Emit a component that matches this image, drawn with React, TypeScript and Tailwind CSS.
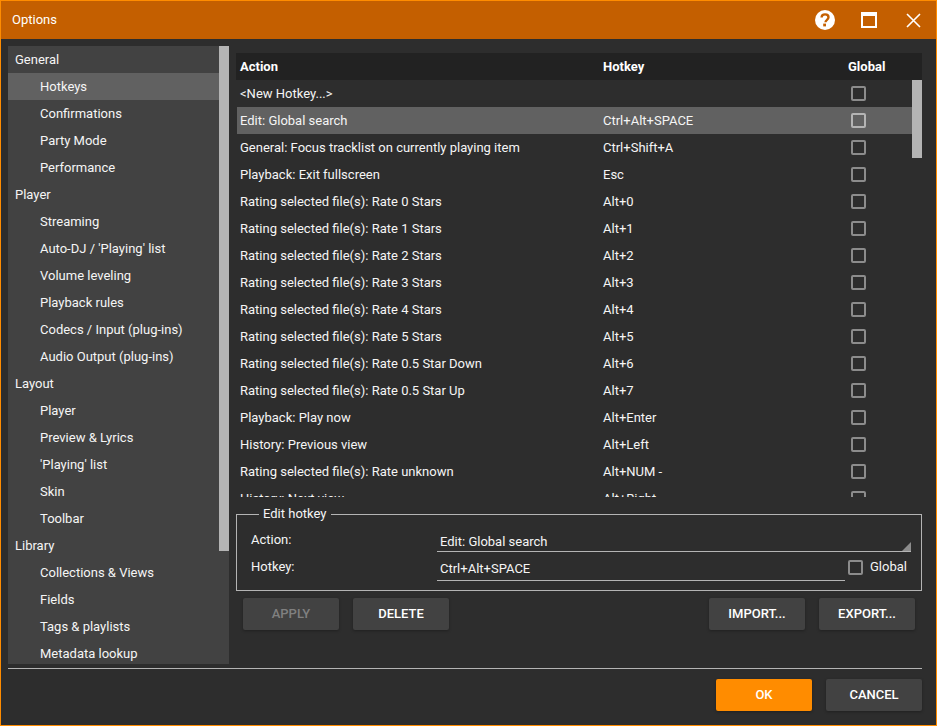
import React from "react";

const nav: [string, boolean][] = [
  ["General", false], ["Hotkeys", true], ["Confirmations", true], ["Party Mode", true], ["Performance", true],
  ["Player", false], ["Streaming", true], ["Auto-DJ / 'Playing' list", true], ["Volume leveling", true], ["Playback rules", true],
  ["Codecs / Input (plug-ins)", true], ["Audio Output (plug-ins)", true],
  ["Layout", false], ["Player", true], ["Preview & Lyrics", true], ["'Playing' list", true], ["Skin", true], ["Toolbar", true],
  ["Library", false], ["Collections & Views", true], ["Fields", true], ["Tags & playlists", true], ["Metadata lookup", true],
];

const rows: [string, string][] = [
  ["<New Hotkey...>", ""],
  ["Edit: Global search", "Ctrl+Alt+SPACE"],
  ["General: Focus tracklist on currently playing item", "Ctrl+Shift+A"],
  ["Playback: Exit fullscreen", "Esc"],
  ["Rating selected file(s): Rate 0 Stars", "Alt+0"],
  ["Rating selected file(s): Rate 1 Stars", "Alt+1"],
  ["Rating selected file(s): Rate 2 Stars", "Alt+2"],
  ["Rating selected file(s): Rate 3 Stars", "Alt+3"],
  ["Rating selected file(s): Rate 4 Stars", "Alt+4"],
  ["Rating selected file(s): Rate 5 Stars", "Alt+5"],
  ["Rating selected file(s): Rate 0.5 Star Down", "Alt+6"],
  ["Rating selected file(s): Rate 0.5 Star Up", "Alt+7"],
  ["Playback: Play now", "Alt+Enter"],
  ["History: Previous view", "Alt+Left"],
  ["Rating selected file(s): Rate unknown", "Alt+NUM -"],
  ["History: Next view", "Alt+Right"],
];

function Check({ light }: { light?: boolean }) {
  return (
    <div className={`w-[15px] h-[15px] shrink-0 rounded-[2px] border-2 ${light ? "border-[#b4b4b4]" : "border-[#8c8c8c]"}`} />
  );
}

function Btn({ label, className = "" }: { label: string; className?: string }) {
  return (
    <div className={`w-[96px] h-[32px] rounded-[2px] flex items-center justify-center font-medium text-[13px] shadow-[0_1px_3px_rgba(0,0,0,0.3)] ${className || "bg-[#424242] text-white"}`}>
      {label}
    </div>
  );
}

export default function App() {
  return (
    <div
      className="w-[937px] h-[726px] border border-[#ff8c00] bg-[#2d2d2d] text-[#f5f5f5] flex flex-col overflow-hidden text-[13px]"
      style={{ fontFamily: "Roboto, sans-serif" }}
    >
      <div className="h-[38px] shrink-0 bg-[#c45f00] flex items-center pl-[11px] text-white">
        <span className="flex-1">Options</span>
        <svg width="22" height="22" viewBox="0 0 22 22" className="mr-[25px]">
          <circle cx="11" cy="11" r="10" fill="#fff" />
          <path d="M7.6 8.6c0-2 1.5-3.2 3.5-3.2s3.4 1.2 3.4 2.9c0 2.6-3 2.5-3 5" fill="none" stroke="#c45f00" strokeWidth="2.4" />
          <rect x="9.2" y="14.6" width="2.8" height="2.8" fill="#c45f00" />
        </svg>
        <div className="w-[16px] h-[16px] border-2 border-white border-t-[4px] mr-[29px]" />
        <svg width="15" height="15" viewBox="0 0 15 15" className="mr-[15px]">
          <path d="M1 1l13 13M14 1L1 14" stroke="#fff" strokeWidth="1.6" fill="none" />
        </svg>
      </div>

      <div className="flex-1 flex flex-col pt-[7px] pl-[7px] pr-[14px] min-h-0">
        <div className="flex h-[618px] shrink-0">
          <div className="w-[221px] h-[618px] shrink-0 bg-[#424242] flex overflow-hidden">
            <div className="w-[211px]">
              {nav.map(([t, sub], i) => (
                <div
                  key={i}
                  className={`h-[27px] flex items-center whitespace-nowrap ${sub ? "pl-[32px]" : "pl-[7px]"} ${i === 1 ? "bg-[#616161]" : ""}`}
                >
                  {t}
                </div>
              ))}
            </div>
            <div className="w-[10px]">
              <div className="h-[505px] bg-[#b4b4b4]" />
            </div>
          </div>

          <div className="flex-1 ml-[7px] pt-[7px] flex flex-col min-w-0">
            <div className="h-[27px] shrink-0 bg-[#222222] flex items-center font-bold text-white">
              <span className="w-[367px] pl-[4px]">Action</span>
              <span className="w-[245px]">Hotkey</span>
              <span>Global</span>
            </div>
            <div className="h-[417px] shrink-0 flex overflow-hidden">
              <div className="flex-1 min-w-0 pl-[1px]">
                {rows.map(([a, h], i) => (
                  <div key={i} className={`h-[27px] flex items-center ${i === 1 ? "bg-[#616161]" : ""}`}>
                    <span className="w-[366px] pl-[3px] whitespace-nowrap">{a}</span>
                    <span className="w-[248px]">{h}</span>
                    <Check light={i === 1} />
                  </div>
                ))}
              </div>
              <div className="w-[10px]">
                <div className="h-[78px] bg-[#b4b4b4]" />
              </div>
            </div>

            <fieldset className="mt-[9px] h-[85px] shrink-0 border border-[#b4b4b4] pl-[14px] pr-[10px] min-w-0">
              <legend className="ml-[8px] px-[4px] h-[16px] leading-[16px] text-[13px]">Edit hotkey</legend>
              <div className="flex items-center h-[25px] mt-[5px]">
                <span className="w-[186px]">Action:</span>
                <div className="relative flex-1 h-[25px] border-b border-[#b4b4b4] flex items-center pl-[3px] pt-[5px]">
                  Edit: Global search
                  <div className="absolute right-0 bottom-0 w-0 h-0 border-l-[9px] border-l-transparent border-b-[9px] border-b-[#8c8c8c]" />
                </div>
              </div>
              <div className="flex items-center h-[29px]">
                <span className="w-[186px]">Hotkey:</span>
                <div className="w-[408px] h-[29px] border-b border-[#b4b4b4] flex items-center pl-[3px] pt-[5px]">Ctrl+Alt+SPACE</div>
                <div className="ml-[3px] mt-[2px]"><Check /></div>
                <span className="ml-[7px]">Global</span>
              </div>
            </fieldset>

            <div className="flex mt-[7px] pl-[7px] pr-[7px]">
              <Btn label="APPLY" className="bg-[#424242] text-[#808080]" />
              <div className="ml-[14px]"><Btn label="DELETE" /></div>
              <div className="flex-1" />
              <Btn label="IMPORT..." />
              <div className="ml-[14px]"><Btn label="EXPORT..." /></div>
            </div>
          </div>
        </div>

        <div className="h-px shrink-0 bg-[#b4b4b4] mt-[4px]" />
        <div className="flex justify-end mt-[10px]">
          <Btn label="OK" className="bg-[#ff8c00] text-white" />
          <div className="ml-[14px]"><Btn label="CANCEL" /></div>
        </div>
      </div>
    </div>
  );
}
